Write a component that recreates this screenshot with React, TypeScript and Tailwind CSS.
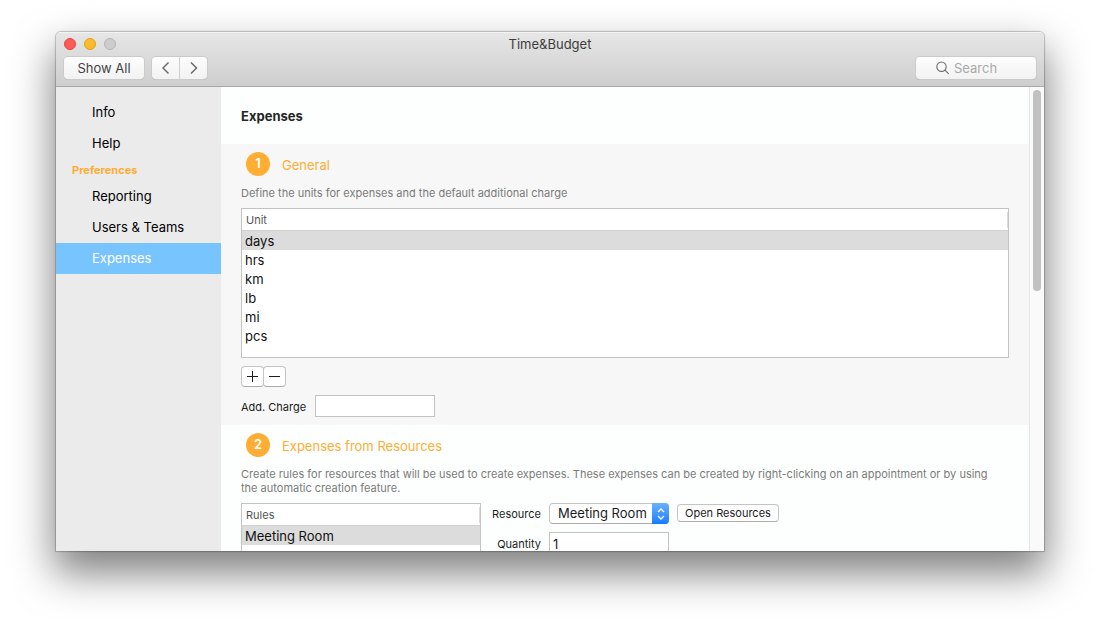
import { useState, type ReactNode } from "react";

const units = ["days", "hrs", "km", "lb", "mi", "pcs"];

const navItems = [
  { label: "Info" },
  { label: "Help" },
  { label: "Preferences", heading: true },
  { label: "Reporting" },
  { label: "Users & Teams" },
  { label: "Expenses" },
];

function Chevron({ direction }: { direction: "left" | "right" }) {
  return (
    <svg width="8" height="14" viewBox="0 0 8 14" fill="none" stroke="#6b6b6b" strokeWidth="1.5" aria-hidden="true">
      <path d={direction === "left" ? "M6.5 1.5 1 7l5.5 5.5" : "M1 1.5 6.5 7 1 12.5"} />
    </svg>
  );
}

function TitleBar() {
  const raised =
    "h-[22px] rounded-[4px] bg-linear-to-b from-[#fdfdfd] to-[#f2f2f2] shadow-[0_0_0_1px_#cbcbcb,0_1px_0_0_#a8a8a8]";
  return (
    <header className="flex h-[55px] shrink-0 flex-col border-t border-b border-t-[#f4f4f4] border-b-[#a9a7a9] bg-linear-to-b from-[#e6e6e6] to-[#cecece]">
      <div className="grid h-5 grid-cols-3 items-center px-2">
        <div className="flex gap-2">
          <button aria-label="Close" className="size-3 rounded-full border border-[#e2463f] bg-[#fc5b57]" />
          <button aria-label="Minimize" className="size-3 rounded-full border border-[#e1a116] bg-[#fdbb2d]" />
          <button aria-label="Zoom" className="size-3 rounded-full border border-[#b5b5b5] bg-[#cdcdcd]" />
        </div>
        <h1 className="pt-[2px] text-center text-[13px] text-[#3c3c3c]">Time&amp;Budget</h1>
      </div>
      <div className="flex items-center px-2 pt-1 text-[13px]">
        <button className={`${raised} w-20 pt-[2px] text-[#434343]`}>Show All</button>
        <div className={`${raised} ml-2 flex w-[55px] divide-x divide-[#cfcfcf]`}>
          <button aria-label="Back" className="flex flex-1 items-center justify-center">
            <Chevron direction="left" />
          </button>
          <button aria-label="Forward" className="flex flex-1 items-center justify-center">
            <Chevron direction="right" />
          </button>
        </div>
        <label className={`${raised} ml-auto flex w-[120px] items-center gap-1 pl-5`}>
          <svg width="14" height="14" viewBox="0 0 14 14" fill="none" stroke="#6e6e6e" strokeWidth="1.1" aria-hidden="true">
            <circle cx="5.5" cy="5.7" r="4.7" />
            <path d="m8.9 9.1 3.8 3.8" />
          </svg>
          <input
            type="text"
            aria-label="Search"
            placeholder="Search"
            className="w-16 min-w-0 bg-transparent pt-[2px] outline-none placeholder:text-[#a9a9a9]"
          />
        </label>
      </div>
    </header>
  );
}

function Sidebar() {
  const [active, setActive] = useState("Expenses");
  return (
    <nav className="w-[165px] shrink-0 bg-[#ebebeb] pt-[10px]">
      {navItems.map((item) =>
        item.heading ? (
          <h2 key={item.label} className="h-[22px] pl-4 text-[11px] leading-[22px] font-bold text-[#ffad33]">
            {item.label}
          </h2>
        ) : (
          <button
            key={item.label}
            onClick={() => setActive(item.label)}
            className={`block h-[31px] w-full pl-9 text-left text-[13px] ${
              item.label === active ? "bg-[#78c4ff] text-white" : "text-black"
            }`}
          >
            {item.label}
          </button>
        ),
      )}
    </nav>
  );
}

function Section({
  step,
  title,
  description,
  className,
  children,
}: {
  step: number;
  title: string;
  description: string;
  className: string;
  children: ReactNode;
}) {
  return (
    <section className={`px-5 pt-2 pb-2 ${className}`}>
      <div className="flex items-center gap-3 pl-[5px]">
        <span className="flex size-6 items-center justify-center rounded-full bg-[#ffad33] text-[13px] font-semibold text-white">
          {step}
        </span>
        <h3 className="pt-1 text-[13px] text-[#ffad33]">{title}</h3>
      </div>
      <p className="mt-[10px] mb-2 pr-3 text-[11px] leading-[14px] text-[#7b7b7b]">{description}</p>
      {children}
    </section>
  );
}

function ListTable({ heading, rows, className }: { heading: string; rows: string[]; className: string }) {
  const [selected, setSelected] = useState(rows[0]);
  return (
    <div className={`h-[150px] border border-[#c3c3c3] bg-white ${className}`}>
      <table className="w-full border-separate border-spacing-0">
        <thead>
          <tr>
            <th className="h-[22px] border-b border-[#d0d0d0] py-0 pl-1 text-left text-[11px] font-normal text-[#555]">
              <div className="border-r border-[#dcdcdc] leading-4">{heading}</div>
            </th>
          </tr>
        </thead>
        <tbody>
          {rows.map((row) => (
            <tr key={row} onClick={() => setSelected(row)} className={row === selected ? "bg-[#dcdcdc]" : ""}>
              <td className="h-[19px] pt-px pb-0 pl-[3px] text-[13px] leading-[18px] text-[#111]">{row}</td>
            </tr>
          ))}
        </tbody>
      </table>
    </div>
  );
}

function SquareButton({ label, d }: { label: string; d: string }) {
  return (
    <button
      aria-label={label}
      className="flex h-[21px] w-[23px] items-center justify-center rounded-[4px] border border-[#c4c4c4] border-b-[#acacac] bg-white"
    >
      <svg width="11" height="11" viewBox="0 0 11 11" stroke="#1c1c1c" strokeWidth="1" aria-hidden="true">
        <path d={d} />
      </svg>
    </button>
  );
}

const field = "h-[22px] w-[120px] border border-[#c3c3c3] bg-white px-[3px] pt-[2px] text-[13px] text-[#1c1c1c] outline-none";

export default function App() {
  return (
    <div className="flex h-screen flex-col bg-white px-14 pt-8 pb-20 font-['Inter',sans-serif]">
      <div className="flex min-h-0 flex-1 flex-col rounded-t-[5px] shadow-[0_0_1px_1px_rgba(0,0,0,0.22),0_20px_40px_2px_rgba(0,0,0,0.5)]">
        <div className="flex min-h-0 flex-1 flex-col overflow-hidden rounded-t-[5px]">
          <TitleBar />
          <div className="flex min-h-0 flex-1">
            <Sidebar />
            <main className="min-w-0 flex-1 overflow-hidden bg-[#fdfffe]">
              <h2 className="px-5 pt-5 pb-[18px] text-[13px] leading-[19px] font-bold text-[#262626]">Expenses</h2>
              <Section
                step={1}
                title="General"
                description="Define the units for expenses and the default additional charge"
                className="bg-[#f7f7f7]"
              >
                <ListTable heading="Unit" rows={units} className="w-full" />
                <div className="mt-2 flex -space-x-px">
                  <SquareButton label="Add unit" d="M0 5.5h11M5.5 0v11" />
                  <SquareButton label="Remove unit" d="M0 5.5h11" />
                </div>
                <div className="mt-2 flex items-center gap-[9px]">
                  <label htmlFor="charge" className="pt-[2px] text-[11px] text-[#1c1c1c]">
                    Add. Charge
                  </label>
                  <input id="charge" type="text" className={field} />
                </div>
              </Section>
              <Section
                step={2}
                title="Expenses from Resources"
                description="Create rules for resources that will be used to create expenses. These expenses can be created by right-clicking on an appointment or by using the automatic creation feature."
                className="bg-[#fdfffe]"
              >
                <div className="flex">
                  <ListTable heading="Rules" rows={["Meeting Room"]} className="w-60 shrink-0" />
                  <div className="grid grid-cols-[60px_auto] content-start items-center gap-2 text-[11px] text-[#1c1c1c]">
                    <label htmlFor="resource" className="pt-[2px] text-right">
                      Resource
                    </label>
                    <div className="flex items-start gap-2">
                      <div className="relative w-[120px]">
                        <select
                          id="resource"
                          className="block h-[21px] w-full appearance-none rounded-[4px] border border-[#c4c4c4] border-b-[#acacac] bg-white pl-2 text-[13px] outline-none"
                        >
                          <option>Meeting Room</option>
                        </select>
                        <span className="pointer-events-none absolute inset-y-0 right-0 flex w-[17px] items-center justify-center rounded-r-[4px] bg-linear-to-b from-[#69b1fa] to-[#0d7dff]">
                          <svg width="8" height="12" viewBox="0 0 8 12" fill="none" stroke="white" strokeWidth="1.4" aria-hidden="true">
                            <path d="M1 4l3-3 3 3M1 8l3 3 3-3" />
                          </svg>
                        </span>
                      </div>
                      <button className="mt-px h-[18px] rounded-[4px] border border-[#c4c4c4] border-b-[#acacac] bg-white px-[7px] leading-4">
                        Open Resources
                      </button>
                    </div>
                    <label htmlFor="quantity" className="pt-[2px] text-right">
                      Quantity
                    </label>
                    <input id="quantity" type="text" defaultValue="1" className={field} />
                  </div>
                </div>
              </Section>
            </main>
            <div className="w-[15px] shrink-0 border-l border-[#e6e6e6] bg-[#fafafa] pt-[3px] pl-[3px]">
              <div className="h-[201px] w-2 rounded-full bg-[#c1c1c1]" />
            </div>
          </div>
        </div>
      </div>
    </div>
  );
}
